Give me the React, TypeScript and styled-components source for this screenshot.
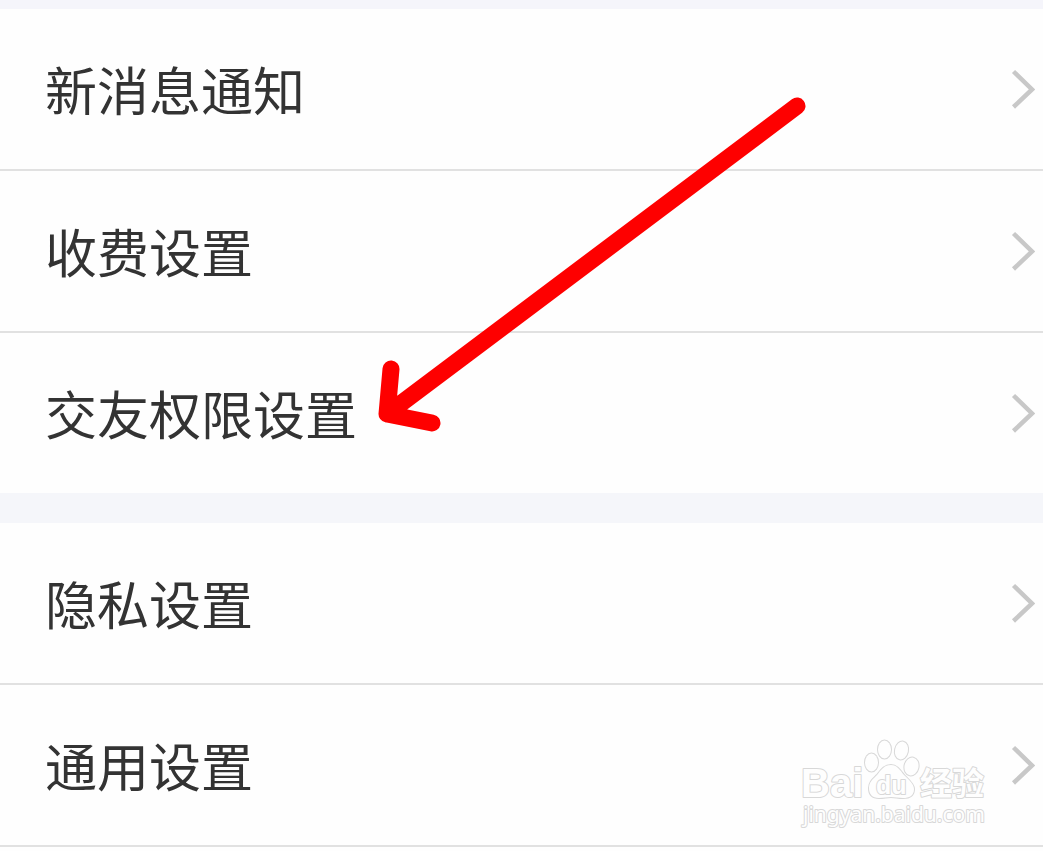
import React from "react";
import styled, { createGlobalStyle } from "styled-components";

const GlobalStyle = createGlobalStyle`
  *, *::before, *::after { box-sizing: border-box; }
  body {
    margin: 0;
    background: #fefefe;
    font-family: "Noto Sans CJK SC", sans-serif;
  }
`;

const Page = styled.main`
  position: relative;
  min-height: 100vh;
  overflow: hidden;
  background: #fefefe;
  border-top: 9px solid #f5f5fb;
`;

const Group = styled.ul`
  list-style: none;
  margin: 0;
  padding: 0;

  & + & {
    border-top: 30px solid #f5f6fa;
  }
`;

const Item = styled.li<{ $divided: boolean }>`
  border-bottom: ${(p) => (p.$divided ? "2px solid #e1e1e1" : "0")};
`;

const RowButton = styled.button`
  display: flex;
  align-items: center;
  justify-content: space-between;
  width: 100%;
  height: 160px;
  padding: 0 8px 0 45px;
  border: 0;
  background: none;
  color: #333;
  font: inherit;
  font-size: 52px;
  line-height: 76px;
  text-align: left;
  cursor: pointer;
`;

const ChevronIcon = styled.svg`
  flex: none;
  width: 24px;
  height: 40px;
  fill: none;
  stroke: #c8c8c8;
  stroke-width: 4.5;
`;

const Arrow = styled.svg`
  position: absolute;
  top: 81px;
  left: 370px;
  width: 450px;
  height: 350px;
  pointer-events: none;
  fill: none;
  stroke: #fe0000;
  stroke-width: 17;
  stroke-linecap: round;
  stroke-linejoin: round;
`;

const Watermark = styled.svg`
  position: absolute;
  top: 721px;
  right: 43px;
  width: 200px;
  height: 110px;
  pointer-events: none;
  fill: #fefefe;
  stroke: #d8d8d8;
  stroke-width: 2;
  paint-order: stroke;
  stroke-linejoin: round;
`;

const groups = [
  [
    { label: "新消息通知", divided: true },
    { label: "收费设置", divided: true },
    { label: "交友权限设置", divided: false },
  ],
  [
    { label: "隐私设置", divided: true },
    { label: "通用设置", divided: true },
  ],
];

function Chevron() {
  return (
    <ChevronIcon viewBox="0 0 24 40" aria-hidden="true">
      <path d="M2.500 2.500 21 20.500 2.500 38" />
    </ChevronIcon>
  );
}

export default function App() {
  return (
    <>
      <GlobalStyle />
      <Page>
        {groups.map((rows, i) => (
          <Group key={i}>
            {rows.map((row) => (
              <Item key={row.label} $divided={row.divided}>
                <RowButton type="button">
                  <span>{row.label}</span>
                  <Chevron />
                </RowButton>
              </Item>
            ))}
          </Group>
        ))}
        <Arrow viewBox="370 90 450 350" aria-hidden="true">
          <path d="M797 106 387 414M391 369 387 414 432 423" />
        </Arrow>
        <Watermark viewBox="800 730 200 110">
          <g strokeWidth="2">
            <ellipse cx="871.500" cy="762.500" rx="6.500" ry="9" />
            <ellipse cx="884.500" cy="749.500" rx="6.500" ry="9" />
            <ellipse cx="901.500" cy="750.500" rx="6.500" ry="9" transform="rotate(12 901.500 750.500)" />
            <ellipse cx="911.500" cy="766.500" rx="7" ry="9" transform="rotate(12 911.500 766.500)" />
            <path d="M891 765c6 0 9 5 13 10 5 5 10 9 10 14 0 7-5 9-11 9-5 0-8-1-12-1s-7 1-12 1c-7 0-10-4-10-10 0-6 4-9 8-13 4-5 7-10 14-10Z" />
          </g>
          <text x="801" y="797" fontFamily="Liberation Sans, sans-serif" fontWeight="700" fontSize="40">
            Bai
          </text>
          <text x="876" y="794" fontFamily="Liberation Sans, sans-serif" fontWeight="700" fontSize="25">
            du
          </text>
          <text x="920" y="795" fontFamily="Noto Sans CJK SC, sans-serif" fontWeight="700" fontSize="32">
            经验
          </text>
          <text x="803" y="822" fontFamily="Noto Sans, sans-serif" fontSize="21">
            jingyan.baidu.com
          </text>
        </Watermark>
      </Page>
    </>
  );
}
